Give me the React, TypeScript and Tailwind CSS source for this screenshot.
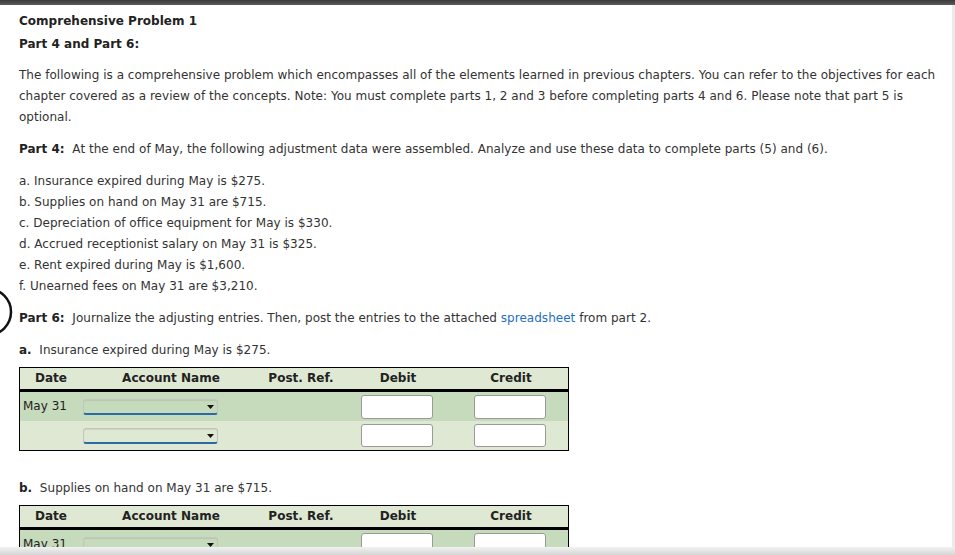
import { FC } from "react";

const font = { fontFamily: '"DejaVu Sans", Verdana, sans-serif' };

const Dropdown: FC = () => (
  <div className="relative h-[16px] w-[135px] rounded-[3px] border border-[#c4c4c4] border-b-2 border-b-[#2b6aa6] bg-transparent shadow-[inset_0_1px_1px_rgba(0,0,0,0.08)]">
    <svg className="absolute right-[3px] top-[5px]" width="7" height="4" viewBox="0 0 7 4">
      <path d="M0 0h7L3.5 4z" fill="#111" />
    </svg>
  </div>
);

const Amount: FC<{ tall?: boolean }> = ({ tall }) => (
  <div
    className={`mx-auto w-[72px] rounded-[3px] border border-[#9a9a9a] bg-white ${
      tall ? "h-[24px]" : "h-[23px]"
    }`}
  />
);

const Journal: FC<{ rows: number }> = ({ rows }) => (
  <div className="w-[550px] border border-black">
    <div className="flex h-[24px] items-center border-b-[3px] border-black bg-[#dfe8d2] text-[12px] font-bold text-[#222]">
      <div className="w-[62px] text-center">Date</div>
      <div className="w-[178px] text-center">Account Name</div>
      <div className="w-[82px] text-center">Post. Ref.</div>
      <div className="w-[112px] text-center">Debit</div>
      <div className="w-[114px] text-center">Credit</div>
    </div>
    {Array.from({ length: rows }).map((_, i) => (
      <div
        key={i}
        className={`flex h-[29px] items-center ${
          i === 0 ? "bg-[#c6dbbc]" : "bg-[#dfe8d2]"
        }`}
      >
        <div className="w-[62px] pl-[3px] text-[12px] text-[#222]">
          {i === 0 ? "May 31" : ""}
        </div>
        <div className="w-[178px] pl-[1px]">
          <Dropdown />
        </div>
        <div className="w-[82px]" />
        <div className="w-[112px] pr-[2px]">
          <Amount tall={i === 0} />
        </div>
        <div className="w-[114px] pr-[2px]">
          <Amount tall={i === 0} />
        </div>
      </div>
    ))}
  </div>
);

const items = [
  "a. Insurance expired during May is $275.",
  "b. Supplies on hand on May 31 are $715.",
  "c. Depreciation of office equipment for May is $330.",
  "d. Accrued receptionist salary on May 31 is $325.",
  "e. Rent expired during May is $1,600.",
  "f. Unearned fees on May 31 are $3,210.",
];

export default function App() {
  return (
    <div
      className="relative h-[555px] w-[955px] overflow-hidden bg-white text-[12px] leading-[21px] tracking-[0.02px] text-[#333]"
      style={font}
    >
      <div className="h-[5px] bg-gradient-to-b from-[#3a3a3a] to-[#5c5c5c]" />
      <div className="flex h-[550px]">
        <div className="flex-1 pl-[19px]">
          <div className="mt-[6px] text-[12px] font-bold text-[#222]">
            Comprehensive Problem 1
          </div>
          <div className="mt-[2px] text-[12px] font-bold text-[#222]">
            Part 4 and Part 6:
          </div>
          <p className="mt-[10px] pr-[10px]">
            The following is a comprehensive problem which encompasses all of
            the elements learned in previous chapters. You can refer to the
            objectives for each chapter covered as a review of the concepts.
            Note: You must complete parts 1, 2 and 3 before completing parts 4
            and 6. Please note that part 5 is optional.
          </p>
          <p className="mt-[11px]">
            <span className="font-bold text-[#222]">Part 4:</span>&nbsp; At the
            end of May, the following adjustment data were assembled. Analyze
            and use these data to complete parts (5) and (6).
          </p>
          <ul className="mt-[11px]">
            {items.map((t) => (
              <li key={t}>{t}</li>
            ))}
          </ul>
          <p className="mt-[11px]">
            <span className="font-bold text-[#222]">Part 6:</span>&nbsp;
            Journalize the adjusting entries. Then, post the entries to the
            attached <span className="text-[#1f6fbf]">spreadsheet</span> from
            part 2.
          </p>
          <p className="mt-[11px]">
            <span className="font-bold text-[#222]">a.</span>&nbsp; Insurance
            expired during May is $275.
          </p>
          <div className="mt-[6px]">
            <Journal rows={2} />
          </div>
          <p className="mt-[27px]">
            <span className="font-bold text-[#222]">b.</span>&nbsp; Supplies on
            hand on May 31 are $715.
          </p>
          <div className="mt-[6px]">
            <Journal rows={1} />
          </div>
        </div>
        <div className="w-[3px] bg-[#ebebeb]" />
      </div>
      <svg
        className="absolute left-0 top-[288px]"
        width="16"
        height="50"
        viewBox="0 0 16 50"
      >
        <circle cx="-12" cy="24" r="23" fill="none" stroke="#111" strokeWidth="2.5" />
      </svg>
      <div className="absolute bottom-0 left-0 h-[8px] w-full bg-gradient-to-b from-[#f2f2f2] to-[#d6d6d6]" />
    </div>
  );
}
